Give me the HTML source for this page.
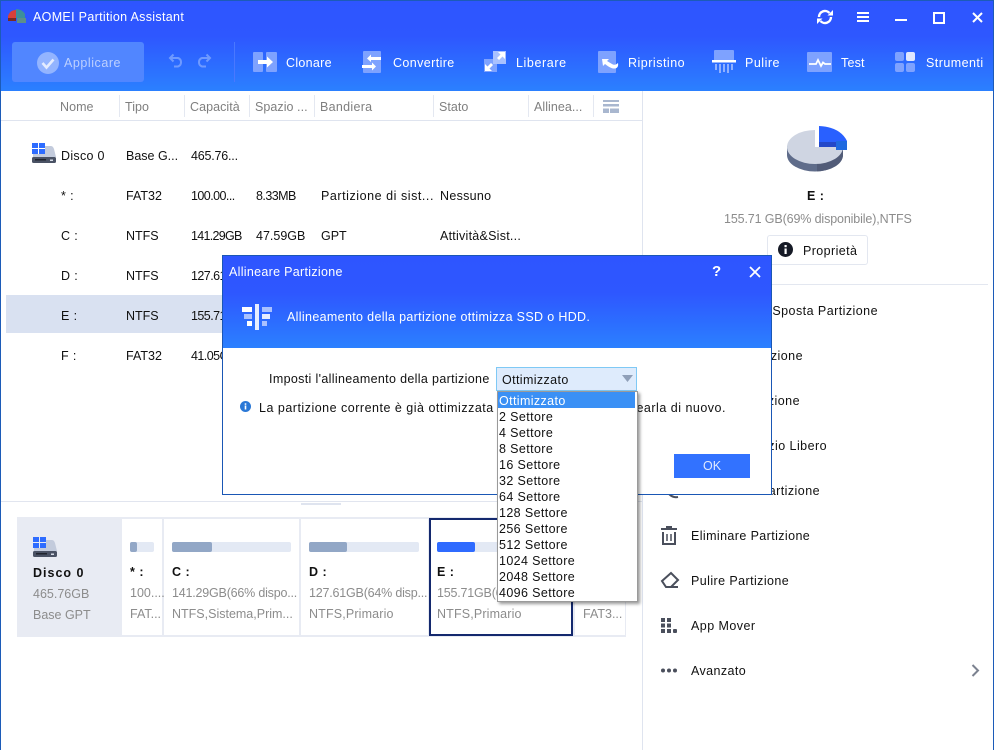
<!DOCTYPE html>
<html lang="it"><head><meta charset="utf-8"><title>AOMEI Partition Assistant</title>
<style>
html,body{margin:0;padding:0;background:#fff}
#w{position:relative;width:994px;height:750px;overflow:hidden;background:#fff;font-family:"Liberation Sans",sans-serif;font-size:12.5px;color:#111}
#w div{position:absolute}
.t{position:absolute;white-space:nowrap;line-height:16px;letter-spacing:.38px}
.n{letter-spacing:0}
.d{letter-spacing:-.55px}
.h{color:#7f7f7f;letter-spacing:.05px}
.g{color:#8c8c8c;letter-spacing:0}
.c{letter-spacing:-.2px}
.b{font-weight:bold;letter-spacing:.5px}
.wh{color:#fff}
svg{position:absolute;overflow:visible}
</style></head><body><div id="w">
<div style="left:0;top:0;width:994px;height:91px;background:linear-gradient(#2e55ff 0,#2e57ff 40%,#2b80ff 100%)"></div>
<div style="left:0;top:0;width:994px;height:1px;background:#1c5bb8"></div>
<div style="left:0;top:0;width:1px;height:750px;background:#1c5bb8"></div>
<div style="left:993px;top:0;width:1px;height:750px;background:#1c5bb8"></div>
<svg style="left:7px;top:8px" width="20" height="18"><path d="M1 8Q3 2 9 2L9 12L1 13Z" fill="#d8403a"/><path d="M9 1Q15 1 18 6L18 10L9 10Z" fill="#3d8f9a"/><path d="M10 10H19V15H10Z" fill="#5d8f8a"/><path d="M1 10H9V13H1Z" fill="#7a2a22"/></svg>
<span class="t wh" style="left:33px;top:9px;letter-spacing:.32px">AOMEI Partition Assistant</span>
<svg style="left:816px;top:9px" width="18" height="16" fill="none" stroke="#fff" stroke-width="2.4"><path d="M3 8A6 6 0 0 1 13.500 4"/><path d="M15 8A6 6 0 0 1 4.500 12"/><path d="M11.500 6.500H17V1Z" fill="#fff" stroke="none"/><path d="M6.500 9.500H1V15Z" fill="#fff" stroke="none"/></svg>
<svg style="left:857px;top:12px" width="12" height="10" fill="#fff"><rect width="12" height="2" y="0"/><rect width="12" height="2" y="4"/><rect width="12" height="2" y="8"/></svg>
<div style="left:895px;top:19px;width:12px;height:2px;background:#fff"></div>
<div style="left:933px;top:12px;width:8px;height:8px;border:2px solid #fff"></div>
<svg style="left:972px;top:12px" width="12" height="12" stroke="#fff" stroke-width="2"><path d="M1 1L10 10M10 1L1 10"/></svg>

<div style="left:12px;top:42px;width:132px;height:40px;border-radius:3px;background:#5186ff"></div>
<svg style="left:37px;top:52px" width="22" height="22"><circle cx="11" cy="11" r="11" fill="#93b4ff"/><path d="M5.500 11L9.500 15.500L16.500 7.500" fill="none" stroke="#e4ecff" stroke-width="2.600"/></svg>
<span class="t" style="left:64px;top:55px;color:#bdd0ff;letter-spacing:.55px">Applicare</span>
<svg style="left:168px;top:54px" width="44" height="15" fill="none" stroke="#6f9aff" stroke-width="2"><path d="M3 4H10A4.500 4.500 0 0 1 10 12.500H6M5.500 .5L2 4L5.500 7.500"/><path d="M41 4H34A4.500 4.500 0 0 0 34 12.500H38M38.500 .5L42 4L38.500 7.500"/></svg>
<div style="left:234px;top:42px;width:1px;height:40px;background:#4a78ff"></div>

<svg style="left:253px;top:52px" width="24" height="20"><rect width="10" height="20" rx="1" fill="#7ea2ff"/><rect x="13" width="11" height="20" rx="1" fill="#7ea2ff"/><path d="M5 8H14V4.500L20 10L14 15.500V12H5Z" fill="#fff"/></svg>
<span class="t wh" style="left:286px;top:55px;letter-spacing:.3px">Clonare</span>
<svg style="left:362px;top:51px" width="20" height="22"><rect x="1" width="18" height="22" rx="1" fill="#7ea2ff"/><path d="M19 6H9V3.500L5 7.500L9 11V9H19Z" fill="#fff"/><path d="M0 14H10V11.500L14 15.500L10 19.500V17H0Z" fill="#fff"/></svg>
<span class="t wh" style="left:393px;top:55px;letter-spacing:.4px">Convertire</span>
<svg style="left:484px;top:51px" width="22" height="21"><rect x="0" y="8" width="13" height="13" fill="#7ea2ff"/><rect x="9" y="0" width="13" height="13" fill="#a9c1ff"/><path d="M1 20V13L3.500 15.500L7 12L9 14L5.500 17.500L8 20Z" fill="#fff"/><path d="M21 1V8L18.500 5.500L15 9L13 7L16.500 3.500L14 1Z" fill="#fff"/></svg>
<span class="t wh" style="left:516px;top:55px;letter-spacing:.6px">Liberare</span>
<svg style="left:598px;top:51px" width="22" height="22"><rect width="18" height="22" rx="1" fill="#7ea2ff"/><path d="M4 8H11L9 10L14 13Q17 15 20 12Q21 18 15 17.500Q12 17 7 13L5 15Z" fill="#fff"/></svg>
<span class="t wh" style="left:628px;top:55px;letter-spacing:.5px">Ripristino</span>
<svg style="left:712px;top:50px" width="24" height="23"><rect x="2" width="20" height="11" rx="1" fill="#7ea2ff"/><rect y="10" width="24" height="2.500" fill="#fff"/><path d="M3 14h2v6H3zM7 14h2v9H7zM11 14h2v8h-2zM15 14h2v9h-2zM19 14h2v6h-2z" fill="#8fb0ff"/></svg>
<span class="t wh" style="left:745px;top:55px;letter-spacing:.5px">Pulire</span>
<svg style="left:807px;top:52px" width="25" height="20"><rect width="25" height="20" rx="1" fill="#7ea2ff"/><path d="M2 12H9L11 8L14 14L16 10.500L18 12H24" fill="none" stroke="#fff" stroke-width="1.800"/></svg>
<span class="t wh" style="left:841px;top:55px;letter-spacing:.2px">Test</span>
<svg style="left:895px;top:52px" width="20" height="20"><rect width="9" height="9" rx="2" fill="#7ea2ff"/><rect x="11" width="9" height="9" rx="2" fill="#dfe7ff"/><rect y="11" width="9" height="9" rx="2" fill="#7ea2ff"/><rect x="11" y="11" width="9" height="9" rx="2" fill="#7ea2ff"/></svg>
<span class="t wh" style="left:926px;top:55px;letter-spacing:.45px">Strumenti</span>

<!-- table header -->
<div style="left:1px;top:120px;width:641px;height:1px;background:#dfe4ef"></div>
<div style="left:642px;top:91px;width:1px;height:659px;background:#dfe4ef"></div>
<div style="left:119px;top:95px;width:1px;height:22px;background:#e4e8f1"></div>
<div style="left:184px;top:95px;width:1px;height:22px;background:#e4e8f1"></div>
<div style="left:249px;top:95px;width:1px;height:22px;background:#e4e8f1"></div>
<div style="left:314px;top:95px;width:1px;height:22px;background:#e4e8f1"></div>
<div style="left:433px;top:95px;width:1px;height:22px;background:#e4e8f1"></div>
<div style="left:528px;top:95px;width:1px;height:22px;background:#e4e8f1"></div>
<div style="left:593px;top:95px;width:1px;height:22px;background:#e4e8f1"></div>
<span class="t h" style="left:60px;top:99px">Nome</span>
<span class="t h" style="left:125px;top:99px">Tipo</span>
<span class="t h" style="left:190px;top:99px">Capacità</span>
<span class="t h" style="left:255px;top:99px">Spazio ...</span>
<span class="t h" style="left:320px;top:99px;letter-spacing:.3px">Bandiera</span>
<span class="t h" style="left:439px;top:99px">Stato</span>
<span class="t h" style="left:534px;top:99px">Allinea...</span>
<svg style="left:603px;top:100px" width="16" height="13" fill="#a9b7cf"><rect width="16" height="2"/><rect y="4" width="16" height="2.500"/><rect y="8.500" width="6" height="4.500"/><rect x="7" y="8.500" width="9" height="4.500"/></svg>

<!-- rows -->
<div style="left:6px;top:295px;width:636px;height:38px;background:#d9e1f1"></div>
<svg style="left:32px;top:143px" width="24" height="20"><path d="M13 3H19Q21 3 22 6L24 14H1V11H13Z" fill="#c3cbdc"/><rect y="14" width="24" height="6" rx="1.500" fill="#4a5264"/><rect x="3" y="16" width="11" height="1.500" fill="#20242e"/><rect x="18" y="16.500" width="3" height="1.500" fill="#d5dbe6"/><rect width="6" height="5" fill="#2e6cff"/><rect x="7" width="6" height="5" fill="#2e6cff"/><rect y="6" width="6" height="5" fill="#2e6cff"/><rect x="7" y="6" width="6" height="5" fill="#2e6cff"/></svg>
<span class="t" style="left:61px;top:148px;letter-spacing:.3px">Disco 0</span><span class="t n" style="left:126px;top:148px">Base G...</span><span class="t" style="left:191px;top:148px;letter-spacing:-.2px">465.76...</span>
<span class="t" style="left:61px;top:188px">* :</span><span class="t n" style="left:126px;top:188px">FAT32</span><span class="t d" style="left:191px;top:188px">100.00...</span><span class="t d" style="left:256px;top:188px">8.33MB</span><span class="t" style="left:321px;top:188px;letter-spacing:.55px">Partizione di sist...</span><span class="t" style="left:440px;top:188px;letter-spacing:.3px">Nessuno</span>
<span class="t" style="left:61px;top:228px">C :</span><span class="t n" style="left:126px;top:228px">NTFS</span><span class="t" style="left:191px;top:228px;letter-spacing:-.7px">141.29GB</span><span class="t n" style="left:256px;top:228px">47.59GB</span><span class="t n" style="left:321px;top:228px">GPT</span><span class="t" style="left:440px;top:228px;letter-spacing:.25px">Attività&amp;Sist...</span>
<span class="t" style="left:61px;top:268px">D :</span><span class="t n" style="left:126px;top:268px">NTFS</span><span class="t d" style="left:191px;top:268px">127.61GB</span>
<span class="t" style="left:61px;top:308px">E :</span><span class="t n" style="left:126px;top:308px">NTFS</span><span class="t d" style="left:191px;top:308px">155.71GB</span>
<span class="t" style="left:61px;top:348px">F :</span><span class="t n" style="left:126px;top:348px">FAT32</span><span class="t d" style="left:191px;top:348px">41.05GB</span>

<div style="left:1px;top:501px;width:641px;height:1px;background:#e1e5ef"></div>
<div style="left:301px;top:503px;width:40px;height:2px;background:#dfe4ef"></div>

<!-- disk map -->
<div style="left:17px;top:517px;width:609px;height:120px;background:#e8ebf3"></div>
<svg style="left:33px;top:537px" width="24" height="20"><path d="M13 3H19Q21 3 22 6L24 14H1V11H13Z" fill="#c3cbdc"/><rect y="14" width="24" height="6" rx="1.500" fill="#4a5264"/><rect x="3" y="16" width="11" height="1.500" fill="#20242e"/><rect x="18" y="16.500" width="3" height="1.500" fill="#d5dbe6"/><rect width="6" height="5" fill="#2e6cff"/><rect x="7" width="6" height="5" fill="#2e6cff"/><rect y="6" width="6" height="5" fill="#2e6cff"/><rect x="7" y="6" width="6" height="5" fill="#2e6cff"/></svg>
<span class="t b" style="left:33px;top:565px;letter-spacing:1px">Disco 0</span>
<span class="t g" style="left:33px;top:586px">465.76GB</span>
<span class="t g" style="left:33px;top:607px">Base GPT</span>

<div style="left:122px;top:519px;width:40px;height:116px;background:#fff"></div>
<div style="left:164px;top:519px;width:135px;height:116px;background:#fff"></div>
<div style="left:301px;top:519px;width:127px;height:116px;background:#fff"></div>
<div style="left:429px;top:518px;width:140px;height:114px;background:#fff;border:2px solid #14296e"></div>
<div style="left:575px;top:519px;width:50px;height:116px;background:#fff"></div>

<div style="left:130px;top:542px;width:24px;height:10px;border-radius:2px;background:#e3e9f4"></div><div style="left:130px;top:542px;width:7px;height:10px;border-radius:2px;background:#92a7c6"></div>
<div style="left:172px;top:542px;width:119px;height:10px;border-radius:2px;background:#e3e9f4"></div><div style="left:172px;top:542px;width:40px;height:10px;border-radius:2px;background:#92a7c6"></div>
<div style="left:309px;top:542px;width:110px;height:10px;border-radius:2px;background:#e3e9f4"></div><div style="left:309px;top:542px;width:38px;height:10px;border-radius:2px;background:#92a7c6"></div>
<div style="left:437px;top:542px;width:120px;height:10px;border-radius:2px;background:#e3e9f4"></div><div style="left:437px;top:542px;width:38px;height:10px;border-radius:2px;background:#2f6bff"></div>

<span class="t b" style="left:130px;top:564px">* :</span><span class="t g" style="left:130px;top:585px">100....</span><span class="t g" style="left:130px;top:606px">FAT...</span>
<span class="t b" style="left:172px;top:564px">C :</span><span class="t g c" style="left:172px;top:585px">141.29GB(66% dispo...</span><span class="t g" style="left:172px;top:606px">NTFS,Sistema,Prim...</span>
<span class="t b" style="left:309px;top:564px">D :</span><span class="t g c" style="left:309px;top:585px">127.61GB(64% disp...</span><span class="t g" style="left:309px;top:606px;letter-spacing:.15px">NTFS,Primario</span>
<span class="t b" style="left:437px;top:564px">E :</span><span class="t g c" style="left:437px;top:585px">155.71GB(69% dispo...</span><span class="t g" style="left:437px;top:606px;letter-spacing:.15px">NTFS,Primario</span>
<span class="t g" style="left:583px;top:606px">FAT3...</span>

<!-- right panel -->
<svg style="left:770px;top:115px" width="84" height="60"><g transform="translate(-770 -115)">
<path d="M787 146V155A28 16.500 0 0 0 843 155V146Z" fill="#5f6c8a"/><path d="M817 171.400A28 16.500 0 0 0 843 155V146H817Z" fill="#525c78"/>
<ellipse cx="815" cy="147" rx="28" ry="17" fill="#cfd5e2"/>
<rect x="815" y="126" width="32" height="21" fill="#fff"/>
<path d="M819 126Q840 127 847 141V147H819Z" fill="#2960ff"/>
<rect x="819" y="142" width="17" height="5" fill="#2348c8"/>
<rect x="836" y="141" width="11" height="9" fill="#1f6ae0"/>
</g></svg>
<span class="t b" style="left:807px;top:188px;width:21px">E :</span>
<span class="t g" style="left:724px;top:211px;letter-spacing:-.13px">155.71 GB(69% disponibile),NTFS</span>
<div style="left:767px;top:235px;width:99px;height:28px;border:1px solid #e3e7f0;border-radius:3px"></div>
<svg style="left:778px;top:242px" width="15" height="15"><circle cx="7.500" cy="7.500" r="7.500" fill="#161a26"/><rect x="6.500" y="6.500" width="2.200" height="5.500" fill="#fff"/><rect x="6.500" y="3" width="2.200" height="2.200" fill="#fff"/></svg>
<span class="t" style="left:803px;top:243px;letter-spacing:.4px">Proprietà</span>
<div style="left:660px;top:284px;width:328px;height:1px;background:#e3e7f0"></div>

<span class="t" style="right:116px;top:303px;letter-spacing:.45px">Ridimensionare/Sposta Partizione</span>
<span class="t" style="right:191px;top:348px;letter-spacing:.45px">Unire Partizione</span>
<span class="t" style="right:194px;top:393px;letter-spacing:.45px">Dividere Partizione</span>
<span class="t" style="right:167px;top:438px;letter-spacing:.45px">Allocare Spazio Libero</span>
<span class="t" style="right:174px;top:483px;letter-spacing:.45px">Formattare Partizione</span>
<svg style="left:661px;top:482px" width="20" height="20" fill="none" stroke="#4a4f5c" stroke-width="2"><path d="M3 5L8 12Q12 16 17 15"/></svg>
<span class="t" style="left:691px;top:528px;letter-spacing:.4px">Eliminare Partizione</span>
<svg style="left:661px;top:527px" width="16" height="18" fill="none" stroke="#4a4f5c" stroke-width="2"><path d="M0 2H16"/><path d="M5 0H11"/><path d="M2 5V17H14V5"/><path d="M6 7V14M10 7V14" stroke-width="1.500"/></svg>
<span class="t" style="left:691px;top:573px;letter-spacing:.42px">Pulire Partizione</span>
<svg style="left:661px;top:571px" width="18" height="18" fill="none" stroke="#4a4f5c" stroke-width="2"><path d="M1 10L10 2L17 9L10 16H5Z"/><path d="M6 16H17"/></svg>
<span class="t" style="left:691px;top:618px;letter-spacing:.45px">App Mover</span>
<svg style="left:661px;top:618px" width="16" height="15" fill="#4a4f5c"><rect width="4" height="4"/><rect x="6" width="4" height="4"/><rect y="5.500" width="4" height="4"/><rect x="6" y="5.500" width="4" height="4"/><rect y="11" width="4" height="4"/><rect x="6" y="11" width="4" height="4"/><rect x="12" y="11" width="4" height="4" rx="1"/></svg>
<span class="t" style="left:691px;top:663px;letter-spacing:.4px">Avanzato</span>
<svg style="left:661px;top:668px" width="16" height="5" fill="#4a4f5c"><circle cx="2" cy="2.500" r="2"/><circle cx="8" cy="2.500" r="2"/><circle cx="14" cy="2.500" r="2"/></svg>
<svg style="left:971px;top:664px" width="9" height="13" fill="none" stroke="#7c8290" stroke-width="2"><path d="M1.500 1L7 6.500L1.500 12"/></svg>

<!-- dialog -->
<div style="left:222px;top:255px;width:548px;height:238px;background:#fff;border:1px solid #1a57b5"></div>
<div style="left:223px;top:256px;width:548px;height:92px;background:linear-gradient(#2e55ff 0,#2e57ff 40%,#2b80ff 100%)"></div>
<span class="t wh" style="left:229px;top:264px;letter-spacing:.3px">Allineare Partizione</span>
<span class="t wh" style="left:712px;top:264px;font-size:15px;font-weight:bold;letter-spacing:0">?</span>
<svg style="left:749px;top:266px" width="12" height="12" stroke="#fff" stroke-width="1.800"><path d="M1 1L11 11M11 1L1 11"/></svg>
<svg style="left:242px;top:304px" width="30" height="26"><rect x="13" width="4" height="26" fill="#e6edff"/><rect x="0" y="3" width="10" height="5" fill="#fff"/><rect x="20" y="3" width="10" height="5" fill="#a9c1ff"/><rect x="2" y="10" width="8" height="5" fill="#a9c1ff"/><rect x="20" y="10" width="8" height="5" fill="#e6edff"/><rect x="5" y="17" width="5" height="5" fill="#fff"/><rect x="20" y="17" width="5" height="5" fill="#a9c1ff"/></svg>
<span class="t wh" style="left:287px;top:309px;letter-spacing:.34px">Allineamento della partizione ottimizza SSD o HDD.</span>
<span class="t" style="left:269px;top:371px;letter-spacing:.34px">Imposti l'allineamento della partizione</span>
<div style="left:496px;top:367px;width:139px;height:22px;background:#deebfc;border:1px solid #7fc9f5"></div>
<span class="t" style="left:502px;top:372px">Ottimizzato</span>
<svg style="left:622px;top:375px" width="11" height="7"><path d="M0 0H11L5.500 7Z" fill="#8f9fb8"/></svg>
<svg style="left:240px;top:401px" width="11" height="11"><circle cx="5.500" cy="5.500" r="5.500" fill="#2a78d6"/><rect x="4.700" y="4.500" width="1.600" height="4" fill="#fff"/><rect x="4.700" y="2.300" width="1.600" height="1.500" fill="#fff"/></svg>
<span class="t" style="left:259px;top:400px;letter-spacing:.5px">La partizione corrente è già ottimizzata</span>
<span class="t" style="right:268px;top:400px;letter-spacing:.5px">allinearla di nuovo.</span>
<div style="left:674px;top:454px;width:76px;height:24px;background:#3272ff;color:#dfe9ff;text-align:center;line-height:24px">OK</div>

<!-- dropdown -->
<div style="left:497px;top:391px;width:139px;height:209px;background:#fff;border:1px solid #9a9a9a;box-shadow:2px 2px 3px rgba(0,0,0,.4)"></div>
<div style="left:498px;top:392px;width:137px;height:16px;background:#3a90f5"></div>
<span class="t" style="left:499px;top:392.500px;color:#fff">Ottimizzato</span>
<span class="t" style="left:499px;top:408.500px">2 Settore</span>
<span class="t" style="left:499px;top:424.500px">4 Settore</span>
<span class="t" style="left:499px;top:440.500px">8 Settore</span>
<span class="t" style="left:499px;top:456.500px">16 Settore</span>
<span class="t" style="left:499px;top:472.500px">32 Settore</span>
<span class="t" style="left:499px;top:488.500px">64 Settore</span>
<span class="t" style="left:499px;top:504.500px">128 Settore</span>
<span class="t" style="left:499px;top:520.500px">256 Settore</span>
<span class="t" style="left:499px;top:536.500px">512 Settore</span>
<span class="t" style="left:499px;top:552.500px">1024 Settore</span>
<span class="t" style="left:499px;top:568.500px">2048 Settore</span>
<span class="t" style="left:499px;top:584.500px">4096 Settore</span>
</div></body></html>
